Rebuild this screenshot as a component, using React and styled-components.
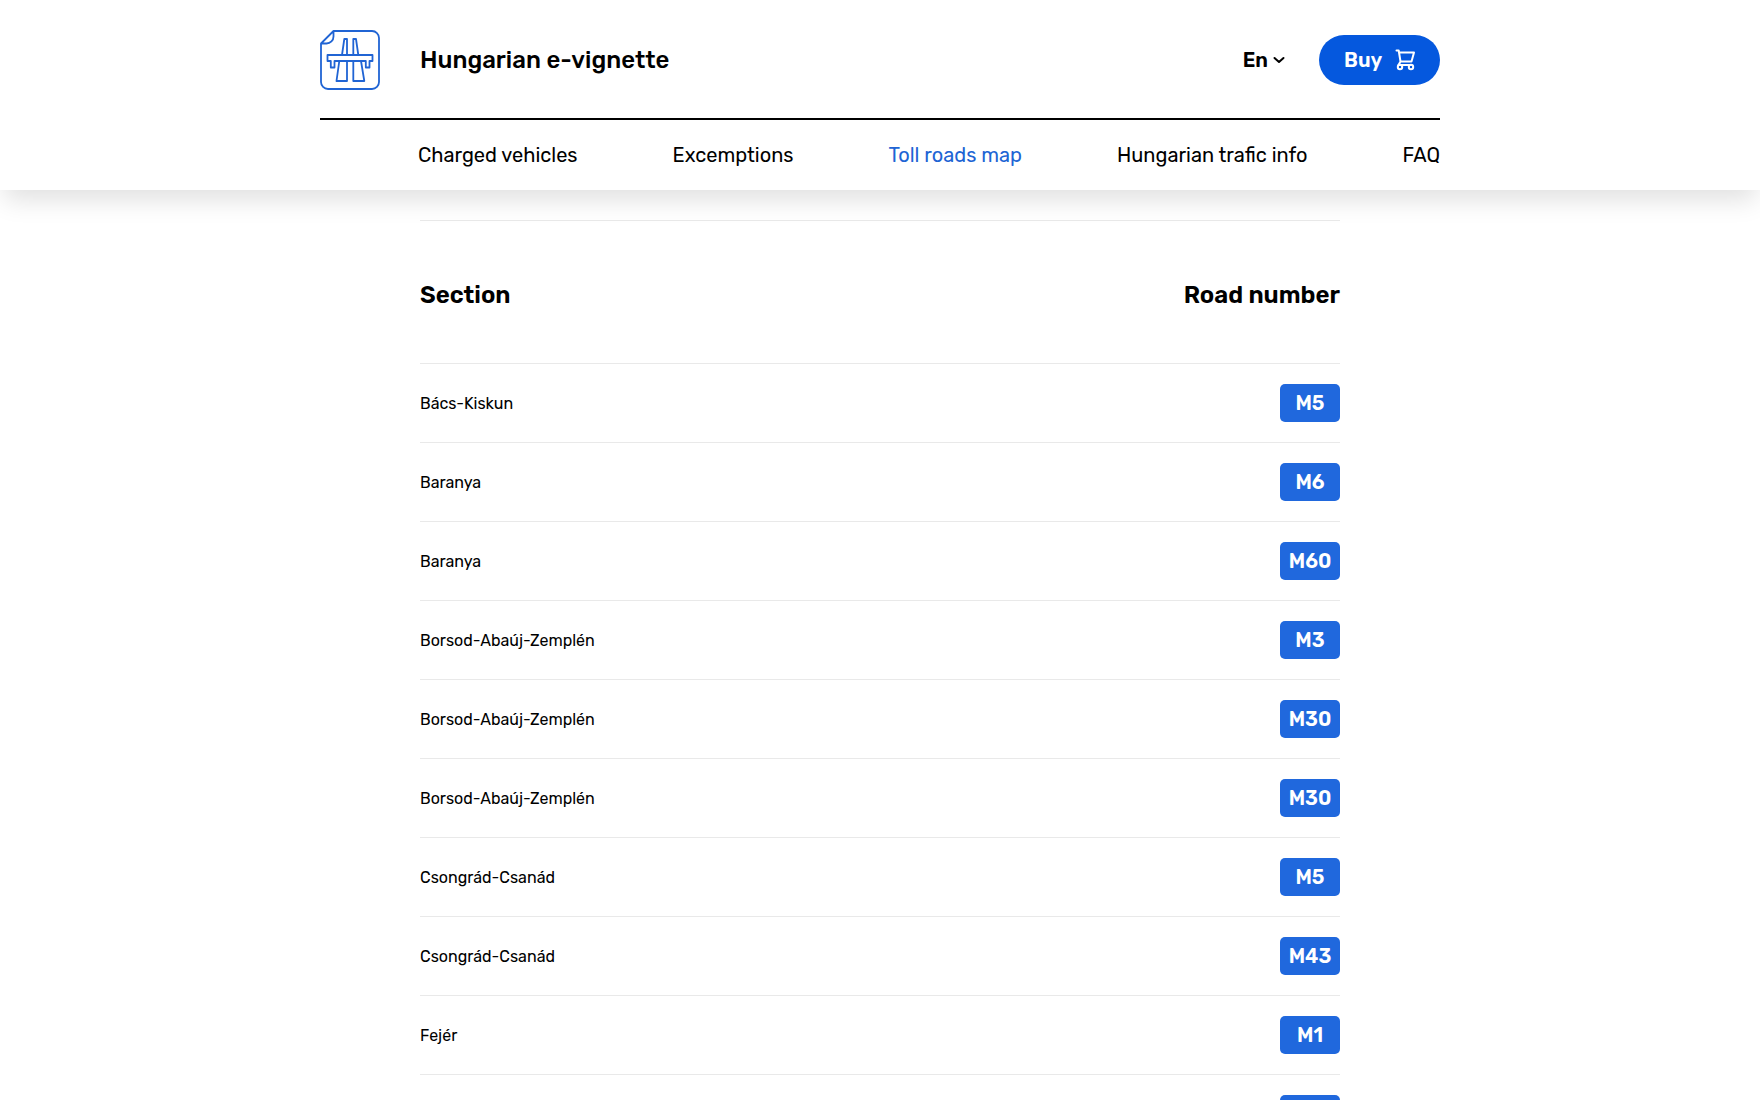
import React from "react";
import styled, { createGlobalStyle } from "styled-components";

const GlobalStyle = createGlobalStyle`
  * { box-sizing: border-box; }
  body {
    margin: 0;
    background: #fff;
    color: #000;
    font-family: Rubik, Inter, "Liberation Sans", sans-serif;
    font-size: 16px;
    -webkit-font-smoothing: antialiased;
  }
`;

const Header = styled.header`
  position: sticky;
  top: 0;
  z-index: 1;
  padding: 0 20px;
  background: #fff;
  box-shadow: 0 14px 24px -4px rgba(0, 0, 0, 0.12);
`;

const Container = styled.div`
  max-width: 1120px;
  margin: 0 auto;
`;

const TopBar = styled.div`
  display: flex;
  align-items: center;
  height: 120px;
  padding-top: 2px;
  border-bottom: 2px solid #000;
`;

const LogoLink = styled.a`
  display: flex;
  align-items: center;
  gap: 40px;
  color: inherit;
  text-decoration: none;
  font-size: 24px;
  font-weight: 500;
`;

const Actions = styled.div`
  display: flex;
  align-items: center;
  gap: 34px;
  margin-left: auto;
`;

const LanguageButton = styled.button`
  display: flex;
  align-items: center;
  gap: 5px;
  padding: 0;
  border: 0;
  background: none;
  color: inherit;
  font: inherit;
  font-size: 20px;
  font-weight: 600;
`;

const BuyButton = styled.button`
  display: flex;
  align-items: center;
  justify-content: space-between;
  width: 121px;
  height: 50px;
  padding: 0 24px 0 25px;
  border: 0;
  border-radius: 25px;
  background: #0558de;
  color: #fff;
  font: inherit;
  font-size: 20px;
  font-weight: 600;
`;

const Nav = styled.nav`
  display: flex;
  align-items: center;
  justify-content: space-between;
  height: 70px;
  padding-left: 98px;
`;

const NavLink = styled.a`
  color: ${(p) => (p.$active ? "#2064d4" : "#000")};
  font-size: 20px;
  text-decoration: none;
`;

const Main = styled.main`
  max-width: 960px;
  margin: 0 auto;
  padding: 30px 20px;
`;

const RoadTable = styled.table`
  width: 100%;
  border-collapse: separate;
  border-spacing: 0;
`;

const HeadCell = styled.th`
  height: 143px;
  padding: 6px 0 0;
  border-top: 1px solid #e9e9e9;
  font-size: 24px;
  font-weight: 600;
  text-align: ${(p) => p.$align || "left"};
`;

const Cell = styled.td`
  height: 79px;
  padding: 0;
  border-top: 1px solid #e9e9e9;
`;

const Badge = styled.span`
  display: flex;
  align-items: center;
  justify-content: center;
  width: 60px;
  height: 38px;
  margin-left: auto;
  border-radius: 5px;
  background: #2068dd;
  color: #fff;
  font-size: 20px;
  font-weight: 600;
`;

const links = ["Charged vehicles", "Excemptions", "Toll roads map", "Hungarian trafic info", "FAQ"];

const sections = [
  ["Bács-Kiskun", "M5"],
  ["Baranya", "M6"],
  ["Baranya", "M60"],
  ["Borsod-Abaúj-Zemplén", "M3"],
  ["Borsod-Abaúj-Zemplén", "M30"],
  ["Borsod-Abaúj-Zemplén", "M30"],
  ["Csongrád-Csanád", "M5"],
  ["Csongrád-Csanád", "M43"],
  ["Fejér", "M1"],
  ["Fejér", "M6"],
];

const Logo = () => (
  <svg width="60" height="60" viewBox="0 0 60 60" fill="none" stroke="#2064d4" strokeWidth="1.8" strokeLinejoin="round" aria-hidden="true">
    <path d="M13.500 1H52a7 7 0 0 1 7 7v44a7 7 0 0 1-7 7H8a7 7 0 0 1-7-7V13.500zM13.500 1v5.500a7 7 0 0 1-7 7H1" />
    <path d="M7.500 25h45v6h-3v6.500h-3.700V31H14.500v6.500h-3.700V31H7.500z" />
    <path d="M22 25 24.300 9H27v16M38.300 25 36 9h-2.700v16" />
    <path d="M19.300 31 16.500 51H27V31M41 31l3.300 20h-11V31" />
  </svg>
);

const Chevron = () => (
  <svg width="12" height="8" viewBox="0 0 12 8" fill="none" stroke="currentColor" strokeWidth="2" strokeLinecap="round" strokeLinejoin="round" aria-hidden="true">
    <path d="M1.500 2 6 6l4.500-4" />
  </svg>
);

const Cart = () => (
  <svg width="22" height="22" viewBox="0 0 22 22" fill="none" stroke="currentColor" strokeWidth="2" strokeLinecap="round" strokeLinejoin="round" aria-hidden="true">
    <path d="M2.500 1.500h2.200L6.500 12.500h11L20 3.500H5.200M6.500 12.500 4.500 16H17" />
    <circle cx="6" cy="18" r="2.200" />
    <circle cx="17" cy="18" r="2.200" />
  </svg>
);

export default function App() {
  return (
    <>
      <GlobalStyle />
      <Header>
        <Container>
          <TopBar>
            <LogoLink href="#">
              <Logo />
              Hungarian e-vignette
            </LogoLink>
            <Actions>
              <LanguageButton type="button">
                En
                <Chevron />
              </LanguageButton>
              <BuyButton type="button">
                Buy
                <Cart />
              </BuyButton>
            </Actions>
          </TopBar>
          <Nav>
            {links.map((label) => (
              <NavLink key={label} href="#" $active={label === "Toll roads map"}>
                {label}
              </NavLink>
            ))}
          </Nav>
        </Container>
      </Header>
      <Main>
        <RoadTable>
          <thead>
            <tr>
              <HeadCell scope="col">Section</HeadCell>
              <HeadCell scope="col" $align="right">Road number</HeadCell>
            </tr>
          </thead>
          <tbody>
            {sections.map(([name, road], i) => (
              <tr key={i}>
                <Cell>{name}</Cell>
                <Cell>
                  <Badge>{road}</Badge>
                </Cell>
              </tr>
            ))}
          </tbody>
        </RoadTable>
      </Main>
    </>
  );
}
